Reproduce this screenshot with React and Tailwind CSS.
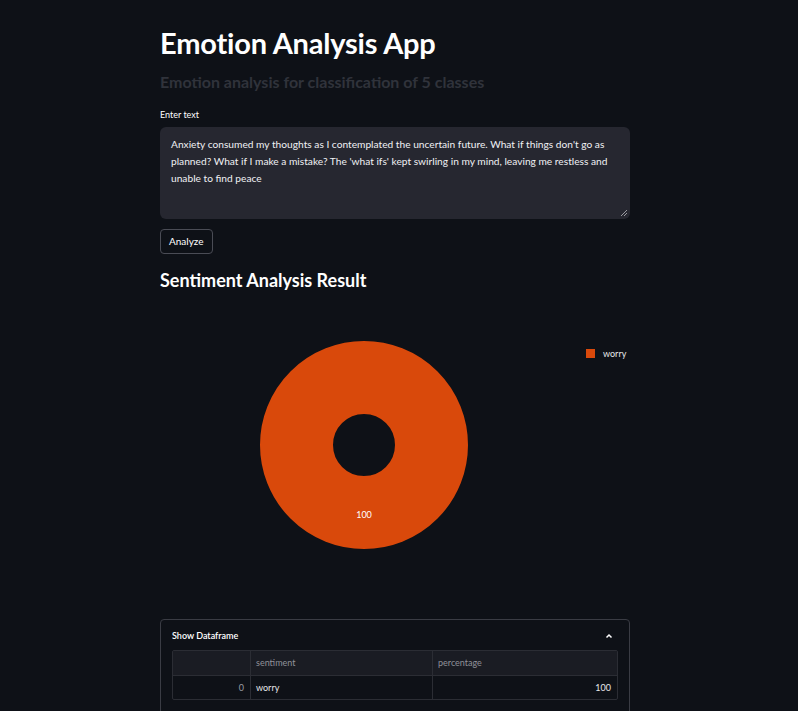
import React from 'react';

const font = { fontFamily: 'Lato, "Noto Sans", sans-serif' };

const Donut = () => {
  // single-slice donut: worry 100%
  const cx = 104;
  const cy = 104;
  return (
    <svg width="208" height="208" viewBox="0 0 208 208">
      <circle cx={cx} cy={cy} r="67.5" fill="none" stroke="#d9490b" strokeWidth="73" />
      <text x={cx} y="177" textAnchor="middle" fill="#fff" fontSize="9" fontFamily="Lato, sans-serif">
        100
      </text>
    </svg>
  );
};

const App = () => {
  return (
    <div className="h-[711px] bg-[#0e1117] text-white overflow-hidden" style={font}>
      <div className="w-[470px] ml-[160px] pt-[25px]">
        <h1 className="text-[29px] font-bold leading-[36px] tracking-[-0.2px]">Emotion Analysis App</h1>
        <h3 className="mt-[11px] text-[16px] font-bold text-[#30333b] leading-[20px]">
          Emotion analysis for classification of 5 classes
        </h3>
        <label className="block mt-[17px] text-[9px] leading-[12px]">Enter text</label>
        <div className="relative mt-[6px] h-[92px] rounded-[6px] bg-[#262730] px-[11px] pt-[9px]">
          <p className="text-[10.2px] leading-[17px] text-[#f0f1f4]">
            Anxiety consumed my thoughts as I contemplated the uncertain future. What if things don't go as
            planned? What if I make a mistake? The 'what ifs' kept swirling in my mind, leaving me restless and
            unable to find peace
          </p>
          <svg className="absolute right-[2px] bottom-[2px]" width="8" height="8" viewBox="0 0 8 8">
            <path d="M7 1L1 7M7 4L4 7" stroke="#9a9aa0" strokeWidth="1" />
          </svg>
        </div>
        <button className="mt-[10px] h-[25px] px-[8px] rounded-[4px] border border-[#4a4c55] text-[10px] text-white">
          Analyze
        </button>
        <h2 className="mt-[14px] text-[18px] font-bold leading-[24px]">Sentiment Analysis Result</h2>

        <div className="relative h-[327px]">
          <div className="absolute left-[100px] top-[49px]">
            <Donut />
          </div>
          <div className="absolute left-[426px] top-[55px] flex items-center gap-[8px]">
            <span className="w-[9px] h-[9px] bg-[#d9490b]" />
            <span className="text-[9px] text-[#e8e8ea]">worry</span>
          </div>
        </div>

        <div className="border border-[#3a3c44] rounded-[4px] px-[11px] pt-[8px] pb-[20px]">
          <div className="flex items-center justify-between h-[16px]">
            <span className="text-[9px] font-semibold">Show Dataframe</span>
            <svg width="10" height="10" viewBox="0 0 10 10" className="mr-[4px]">
              <path d="M2.5 6.5L5 4L7.5 6.5" stroke="#fff" strokeWidth="1.5" fill="none" />
            </svg>
          </div>
          <div className="mt-[6px] border border-[#2b2d34] rounded-[2px] text-[9px]">
            <div className="grid grid-cols-[78px_182px_1fr] h-[24px] bg-[#1a1c23] text-[#8f9199]">
              <div className="border-r border-[#2b2d34]" />
              <div className="border-r border-[#2b2d34] px-[5px] flex items-center">sentiment</div>
              <div className="px-[5px] flex items-center">percentage</div>
            </div>
            <div className="grid grid-cols-[78px_182px_1fr] h-[24px] border-t border-[#2b2d34] text-[#e6e6ea]">
              <div className="border-r border-[#2b2d34] px-[6px] flex items-center justify-end text-[#9a9ca3]">0</div>
              <div className="border-r border-[#2b2d34] px-[5px] flex items-center">worry</div>
              <div className="px-[6px] flex items-center justify-end">100</div>
            </div>
          </div>
        </div>
      </div>
    </div>
  );
};

export default App;
